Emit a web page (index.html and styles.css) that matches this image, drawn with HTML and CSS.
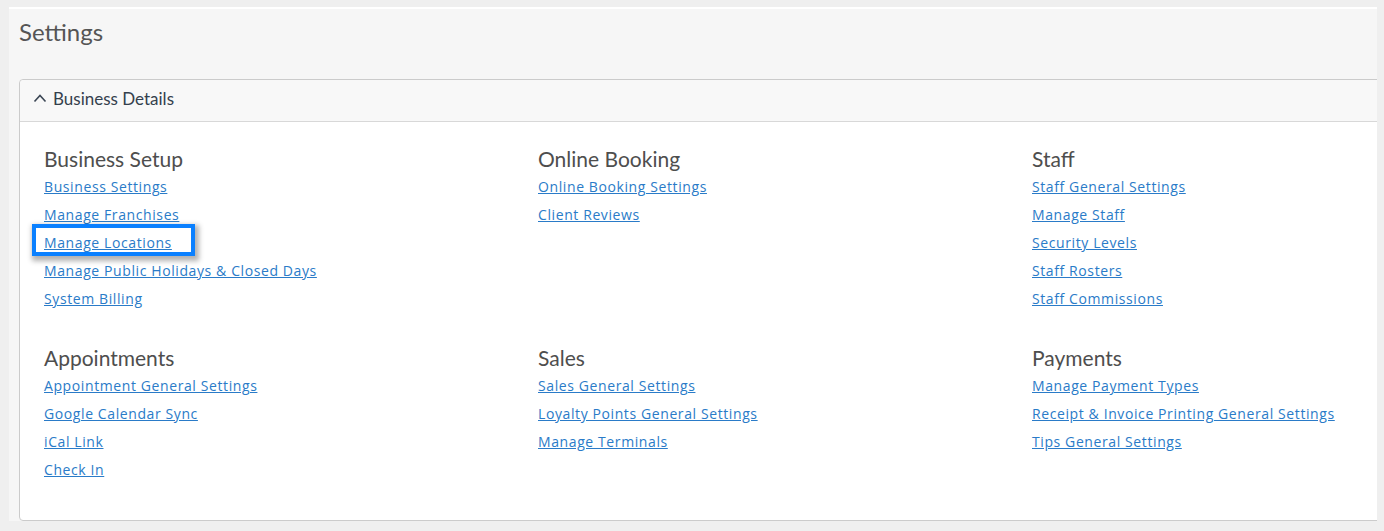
FILE: index.html
```html
<!DOCTYPE html>
<html>
<head>
    <title>Settings</title>
    <link rel="stylesheet" href="styles.css">
</head>
<body>
    <div class="page">
        <h1 class="page-title">Settings</h1>

        <div class="panel">
            <div class="panel-heading">
                <svg class="chevron" width="14" height="10" viewBox="0 0 14 10">
                    <path d="M1.5 8.5 L7 2.5 L12.5 8.5" fill="none" stroke="#3b4654" stroke-width="1.6"/>
                </svg>
                Business Details
            </div>
            <div class="panel-body">
                <div class="settings-grid">
                    <div class="group">
                        <h3>Business Setup</h3>
                        <a href="#">Business Settings</a>
                        <a href="#">Manage Franchises</a>
                        <a href="#" class="highlight">Manage Locations</a>
                        <a href="#">Manage Public Holidays &amp; Closed Days</a>
                        <a href="#">System Billing</a>
                    </div>
                    <div class="group">
                        <h3>Online Booking</h3>
                        <a href="#">Online Booking Settings</a>
                        <a href="#">Client Reviews</a>
                    </div>
                    <div class="group">
                        <h3>Staff</h3>
                        <a href="#">Staff General Settings</a>
                        <a href="#">Manage Staff</a>
                        <a href="#">Security Levels</a>
                        <a href="#">Staff Rosters</a>
                        <a href="#">Staff Commissions</a>
                    </div>
                    <div class="group">
                        <h3>Appointments</h3>
                        <a href="#">Appointment General Settings</a>
                        <a href="#">Google Calendar Sync</a>
                        <a href="#">iCal Link</a>
                        <a href="#">Check In</a>
                    </div>
                    <div class="group">
                        <h3>Sales</h3>
                        <a href="#">Sales General Settings</a>
                        <a href="#">Loyalty Points General Settings</a>
                        <a href="#">Manage Terminals</a>
                    </div>
                    <div class="group">
                        <h3>Payments</h3>
                        <a href="#">Manage Payment Types</a>
                        <a href="#">Receipt &amp; Invoice Printing General Settings</a>
                        <a href="#">Tips General Settings</a>
                    </div>
                </div>
            </div>
        </div>
    </div>
</body>
</html>
```

FILE: styles.css
```css
html, body {
    margin: 0;
    height: 100%;
}
body {
    background-color: #efefef;
    font-family: "Open Sans", Arial, sans-serif;
    padding: 7px 7px 0 9px;
    box-sizing: border-box;
    overflow: hidden;
}
.page {
    background-color: #f6f6f6;
    border-top: 2px solid #fff;
    padding: 10px 0 0 10px;
    height: 514px;
    box-sizing: border-box;
    overflow: hidden;
}
.page-title {
    margin: 0;
    font-family: Lato, "Open Sans", sans-serif;
    font-size: 24px;
    font-weight: normal;
    color: #555;
    line-height: 26px;
    height: 60px;
}
.panel {
    border: 1px solid #cbcbcb;
    border-radius: 4px 0 0 4px;
    margin-right: -20px;
    background-color: #fff;
    height: 442px;
    box-sizing: border-box;
}
.panel-heading {
    height: 42px;
    background-color: #f8f8f8;
    border-bottom: 1px solid #d8d8d8;
    border-radius: 4px 0 0 0;
    display: flex;
    align-items: center;
    padding: 0 0 4px 13px;
    box-sizing: border-box;
    font-family: Lato, "Open Sans", sans-serif;
    font-size: 17px;
    color: #34404d;
}
.chevron {
    margin-right: 6px;
    margin-top: -1px;
}
.panel-body {
    padding: 24px 0 0 24px;
}
.settings-grid {
    display: grid;
    grid-template-columns: 494px 494px 494px;
    row-gap: 32px;
}
.group {
    display: flex;
    flex-direction: column;
    align-items: flex-start;
}
.group h3 {
    margin: 0 0 1px;
    font-family: Lato, "Open Sans", sans-serif;
    font-size: 21px;
    font-weight: normal;
    color: #4e4e4e;
    line-height: 26px;
}
.group a {
    color: #2a7bc8;
    font-size: 14px;
    letter-spacing: 0.6px;
    line-height: 28px;
    text-decoration: underline;
}
.group a.highlight {
    border: 4px solid #0a80ff;
    box-shadow: 2px 3px 5px 2px rgba(0,0,0,0.3);
    margin: -5px 0 1px -12px;
    padding: 6px 19px 0 8px;
    line-height: 18px;
}
```
